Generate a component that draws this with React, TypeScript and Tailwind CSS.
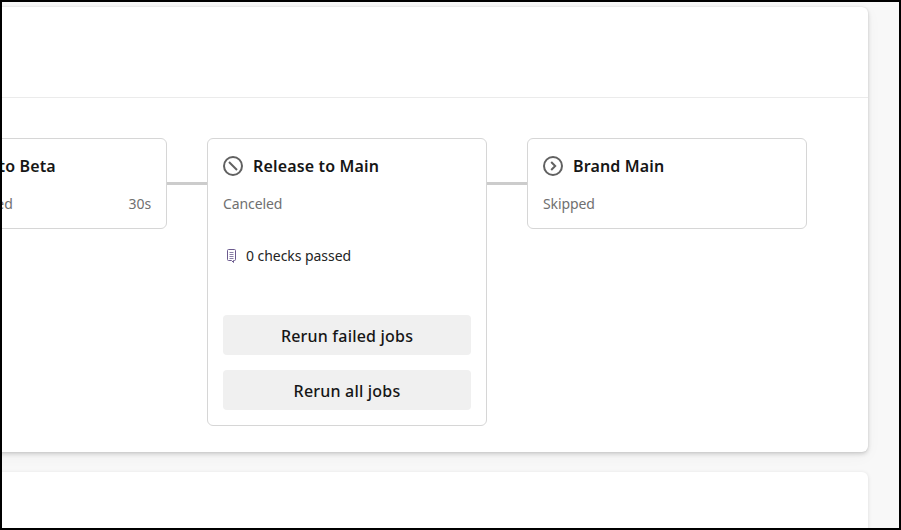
const font = { fontFamily: '"Noto Sans", "Open Sans", sans-serif' }

function CanceledIcon() {
  return (
    <svg width="20" height="20" viewBox="0 0 20 20" fill="none" stroke="#616161" strokeWidth="2" className="shrink-0">
      <circle cx="10" cy="10" r="9" />
      <path d="M6 6 L14 14" />
    </svg>
  )
}

function SkippedIcon() {
  return (
    <svg width="20" height="20" viewBox="0 0 20 20" fill="none" stroke="#616161" strokeWidth="2" className="shrink-0">
      <circle cx="10" cy="10" r="9" />
      <path d="M8.2 6 L12.2 10 L8.2 14" />
    </svg>
  )
}

function ChecksIcon() {
  return (
    <svg width="11" height="14" viewBox="0 0 11 14" fill="none" strokeWidth="1" className="shrink-0">
      <path d="M1.5 1.5 Q1.5 .5 2.5 .5 H8.5 Q9.5 .5 9.5 1.5 V10.5 Q9.5 11.5 8.5 11.5 H7.5 V13.5 L5.5 11.5 H2.5 Q1.5 11.5 1.5 10.5 Z" stroke="#6b5a8e" />
      <path d="M3.5 3.5 H7.5 M3.5 5.5 H7.5 M3.5 7.5 H7.5 M3.5 9.5 H7.5" stroke="#8a7fa6" />
    </svg>
  )
}

function Node({ title, icon, status, time, children }: { title: string; icon?: React.ReactNode; status: string; time?: string; children?: React.ReactNode }) {
  return (
    <div className="w-[280px] shrink-0 rounded-md border border-[#d6d6d6] bg-white px-[15px] pt-[16px] pb-[14px]">
      <div className="flex h-[22px] items-center gap-[10px]">
        {icon}
        <span className="text-[16px] font-semibold leading-[22px] tracking-[0.15px] whitespace-nowrap text-[#161616]">{title}</span>
      </div>
      <div className="mt-[17px] flex h-[20px] items-center justify-between text-[14px] leading-[20px] tracking-[-0.1px] text-[#707070]">
        <span>{status}</span>
        {time && <span>{time}</span>}
      </div>
      {children}
    </div>
  )
}

function Connector() {
  return <div className="mt-[44px] h-[3px] w-10 shrink-0 bg-[#cccccc]" />
}

function RerunButton({ label }: { label: string }) {
  return (
    <button className="h-[40px] w-full rounded-sm bg-[#f0f0f0] pt-[1px] text-[16px] font-medium tracking-[0.2px] text-[#161616]">
      {label}
    </button>
  )
}

export default function App() {
  return (
    <div style={font} className="h-[530px] w-[901px] overflow-hidden border-2 border-black bg-[#f8f8f8]">
      <div className="-ml-[300px] mt-[5px] mr-[31px] rounded-md bg-white shadow-[0_2px_4px_rgba(0,0,0,0.16),0_0_2px_rgba(0,0,0,0.1),0_4px_16px_rgba(0,0,0,0.04)]">
        <div className="h-[91px] border-b border-[#ebebeb]" />
        <div className="flex h-[354px] items-start pt-[40px] pl-[185px]">
          <Node title="Release to Beta" icon={<CanceledIcon />} status="Partly succeeded" time="30s" />
          <Connector />
          <Node title="Release to Main" icon={<CanceledIcon />} status="Canceled">
            <div className="mt-[32px] flex h-[20px] items-center gap-[9px] pl-[3px] text-[14px] leading-[20px] tracking-[-0.05px] text-[#242424]">
              <ChecksIcon />
              <span>0 checks passed</span>
            </div>
            <div className="mt-[49px] mb-[1px] flex flex-col gap-[15px]">
              <RerunButton label="Rerun failed jobs" />
              <RerunButton label="Rerun all jobs" />
            </div>
          </Node>
          <Connector />
          <Node title="Brand Main" icon={<SkippedIcon />} status="Skipped" />
        </div>
      </div>
      <div className="-ml-[300px] mt-[20px] mr-[31px] h-[100px] rounded-md bg-white shadow-[0_1px_4px_rgba(0,0,0,0.12)]" />
    </div>
  )
}
